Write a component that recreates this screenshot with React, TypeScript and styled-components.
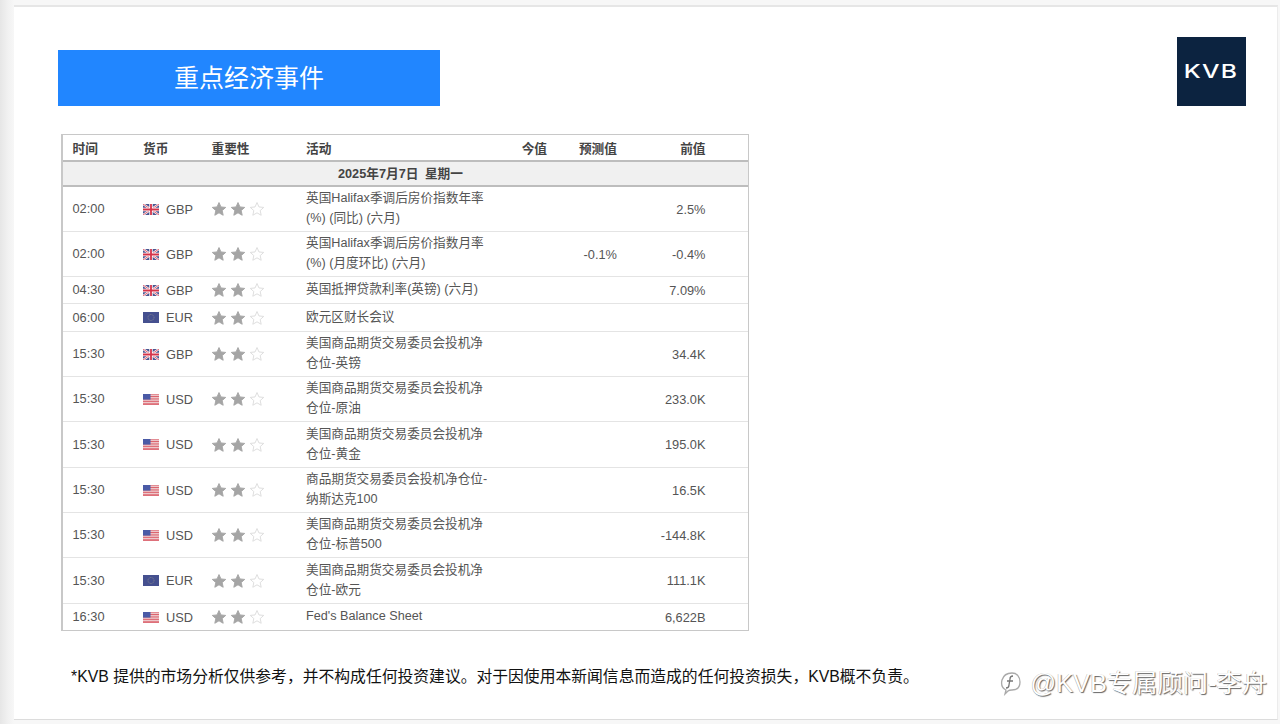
import React from "react";
import styled, { createGlobalStyle } from "styled-components";

const Global = createGlobalStyle`
  html, body { margin: 0; padding: 0; height: 100%; }
  body { background: #f6f6f6; font-family: "Liberation Sans", "Noto Sans CJK SC", sans-serif; overflow: hidden; }
`;

const Page = styled.div`
  width: 1280px;
  height: 724px;
  box-sizing: border-box;
  padding: 5px 2px 4px 14px;
  background: linear-gradient(90deg, #e6e6e6 0, #f1f1f1 8px, #f7f7f7 14px);
  display: flex;
`;

const Slide = styled.main`
  position: relative;
  flex: 1;
  box-sizing: border-box;
  background: #fff;
  border-top: 2px solid #e6e6e6;
  border-bottom: 1px solid #dcdcdc;
  border-right: 1px solid #ececec;
  padding: 30px 31px 0 44px;
  display: flex;
  flex-direction: column;
`;

const Header = styled.header`
  display: flex;
  justify-content: space-between;
  align-items: flex-end;
`;

const Banner = styled.h1`
  width: 382px;
  height: 56px;
  margin: 0;
  background: #2186ff;
  color: #fff;
  font-size: 25px;
  font-weight: 400;
  line-height: 53px;
  text-align: center;
  box-sizing: border-box;
  font-family: "Noto Sans CJK SC", sans-serif;
`;

const Logo = styled.div`
  width: 69px;
  height: 69px;
  background: #0c2340;
  color: #fff;
  display: flex;
  align-items: center;
  justify-content: center;
  font-family: "Inter", "Liberation Sans", sans-serif;
  font-weight: 500;
  font-size: 19px;
  letter-spacing: 1px;
`;

const LogoMark = styled.span`
  display: inline-block;
  transform: scaleX(1.3);
`;

const Table = styled.table`
  width: 687px;
  margin: 28px 0 0 3px;
  table-layout: fixed;
  border-collapse: separate;
  border-spacing: 0;
  border: 1px solid #c8c8c8;
  border-left-width: 2px;
  font-size: 12.8px;
  color: #555;
`;

const HeadCell = styled.th<{ $align?: string; $pad?: number }>`
  height: 25px;
  padding: 0 ${(p) => (p.$align === "right" ? (p.$pad ?? 0) : 0)}px 0 ${(p) => (p.$align === "right" ? 0 : (p.$pad ?? 10))}px;
  text-align: ${(p) => p.$align ?? "left"};
  font-size: 12.7px;
  font-weight: 700;
  color: #444;
  border-bottom: 2px solid #bdbdbd;
`;

const DateCell = styled.td`
  height: 25px;
  padding: 0 10px 2px 0;
  box-sizing: border-box;
  background: #f0f0f0;
  text-align: center;
  font-size: 12.7px;
  font-weight: 700;
  color: #444;
  border-bottom: 2px solid #bdbdbd;
  word-spacing: 3px;
`;

const Row = styled.tr<{ $height: number }>`
  height: ${(p) => p.$height}px;
`;

const Cell = styled.td<{ $last?: boolean }>`
  padding: 0;
  border-bottom: ${(p) => (p.$last ? "none" : "1px solid #e4e4e4")};
  vertical-align: middle;
`;

const TimeCell = styled(Cell)`
  padding-left: 9.5px;
  padding-bottom: 1px;
`;

const CurrencyWrap = styled.div`
  display: flex;
  align-items: center;
  gap: 7px;
  padding-left: 10px;
`;

const StarsWrap = styled.div`
  display: flex;
  gap: 5px;
  padding: 0 0 0 9.5px;
`;

const ActivityCell = styled(Cell)`
  padding-left: 9px;
  line-height: 20px;
  white-space: pre-line;
  font-size: 12.65px;
  padding-bottom: 2px;
`;

const NumberCell = styled(Cell)<{ $pad: number }>`
  text-align: right;
  padding-right: ${(p) => p.$pad}px;
  font-size: 12.8px;
`;

const Disclaimer = styled.p`
  margin: 35px 0 0 13px;
  font-size: 15.8px;
  line-height: 22px;
  color: #111;
  white-space: nowrap;
`;

const Watermark = styled.div`
  position: absolute;
  right: 10px;
  bottom: 21px;
  display: flex;
  align-items: center;
  gap: 8px;
  font-size: 25.3px;
  line-height: 30px;
  color: #fff;
  text-shadow: 1px 1px 1px rgba(0, 0, 0, 0.6), -0.5px -0.5px 0 rgba(0, 0, 0, 0.3);
`;

const GB = () => (
  <svg width="16" height="11" viewBox="0 0 16 11">
    <rect width="16" height="11" fill="#4a5590" />
    <path d="M0 0 16 11M16 0 0 11" stroke="#fff" strokeWidth="2.2" />
    <path d="M0 0 16 11M16 0 0 11" stroke="#d5344a" strokeWidth=".8" />
    <path d="M8 0V11M0 5.5H16" stroke="#fff" strokeWidth="3.4" />
    <path d="M8 0V11M0 5.500H16" stroke="#d5344a" strokeWidth="1.8" />
  </svg>
);

const US = () => (
  <svg width="16" height="11" viewBox="0 0 16 11">
    <rect width="16" height="11" fill="#f4f0f0" />
    <path d="M0 .8H16M0 2.5H16M0 4.2H16M0 5.9H16M0 7.6H16M0 9.3H16M0 10.6H16" stroke="#d9545f" strokeWidth=".9" />
    <rect width="7.5" height="5.6" fill="#4a5aa6" />
  </svg>
);

const EU = () => (
  <svg width="16" height="11" viewBox="0 0 16 11">
    <rect width="16" height="11" fill="#45508f" />
    <circle cx="8" cy="5.5" r="3" fill="none" stroke="#7d7f8f" strokeWidth=".9" strokeDasharray="1 .6" />
  </svg>
);

const STAR = "M7.5 .6 9.6 5.3 14.7 5.8 10.9 9.2 12 14.2 7.5 11.6 3 14.2 4.1 9.2 .3 5.8 5.4 5.3Z";

const Star = ({ filled }: { filled: boolean }) => (
  <svg width="14" height="14" viewBox="0 0 15 15">
    <path d={STAR} fill={filled ? "#a5a5a5" : "#fff"} stroke={filled ? "#a5a5a5" : "#dcdcdc"} strokeWidth="1" strokeLinejoin="round" />
  </svg>
);

const Flags = { GBP: GB, USD: US, EUR: EU } as const;
type Cur = keyof typeof Flags;

type Ev = { t: string; c: Cur; a: string; f?: string; p?: string; h: number };

const events: Ev[] = [
  { t: "02:00", c: "GBP", a: "英国Halifax季调后房价指数年率\n(%) (同比) (六月)", p: "2.5%", h: 45 },
  { t: "02:00", c: "GBP", a: "英国Halifax季调后房价指数月率\n(%) (月度环比) (六月)", f: "-0.1%", p: "-0.4%", h: 45 },
  { t: "04:30", c: "GBP", a: "英国抵押贷款利率(英镑) (六月)", p: "7.09%", h: 27 },
  { t: "06:00", c: "EUR", a: "欧元区财长会议", h: 28 },
  { t: "15:30", c: "GBP", a: "美国商品期货交易委员会投机净\n仓位-英镑", p: "34.4K", h: 45 },
  { t: "15:30", c: "USD", a: "美国商品期货交易委员会投机净\n仓位-原油", p: "233.0K", h: 45 },
  { t: "15:30", c: "USD", a: "美国商品期货交易委员会投机净\n仓位-黄金", p: "195.0K", h: 46 },
  { t: "15:30", c: "USD", a: "商品期货交易委员会投机净仓位-\n纳斯达克100", p: "16.5K", h: 45 },
  { t: "15:30", c: "USD", a: "美国商品期货交易委员会投机净\n仓位-标普500", p: "-144.8K", h: 45 },
  { t: "15:30", c: "EUR", a: "美国商品期货交易委员会投机净\n仓位-欧元", p: "111.1K", h: 46 },
  { t: "16:30", c: "USD", a: "Fed's Balance Sheet", p: "6,622B", h: 26 },
];

export default function App() {
  return (
    <Page>
      <Global />
      <Slide>
        <Header>
          <Banner>重点经济事件</Banner>
          <Logo>
            <LogoMark>KVB</LogoMark>
          </Logo>
        </Header>
        <Table>
          <colgroup>
            <col width="70" />
            <col width="69" />
            <col width="95" />
            <col width="200" />
            <col width="50" />
            <col width="70" />
            <col width="131" />
          </colgroup>
          <thead>
            <tr>
              <HeadCell $pad={9.5}>时间</HeadCell>
              <HeadCell $pad={10}>货币</HeadCell>
              <HeadCell $pad={9.5}>重要性</HeadCell>
              <HeadCell $pad={9}>活动</HeadCell>
              <HeadCell $align="right">今值</HeadCell>
              <HeadCell $align="right">预测值</HeadCell>
              <HeadCell $align="right" $pad={42.5}>前值</HeadCell>
            </tr>
            <tr>
              <DateCell colSpan={7}>2025年7月7日 星期一</DateCell>
            </tr>
          </thead>
          <tbody>
            {events.map((e, i) => {
              const Flag = Flags[e.c];
              const last = i === events.length - 1;
              return (
                <Row key={i} $height={e.h}>
                  <TimeCell $last={last}>{e.t}</TimeCell>
                  <Cell $last={last}>
                    <CurrencyWrap>
                      <Flag />
                      <span>{e.c}</span>
                    </CurrencyWrap>
                  </Cell>
                  <Cell $last={last}>
                    <StarsWrap>
                      <Star filled />
                      <Star filled />
                      <Star filled={false} />
                    </StarsWrap>
                  </Cell>
                  <ActivityCell $last={last}>{e.a}</ActivityCell>
                  <NumberCell $last={last} $pad={0} />
                  <NumberCell $last={last} $pad={0}>{e.f}</NumberCell>
                  <NumberCell $last={last} $pad={42.5}>{e.p}</NumberCell>
                </Row>
              );
            })}
          </tbody>
        </Table>
        <Disclaimer>*KVB 提供的市场分析仅供参考，并不构成任何投资建议。对于因使用本新闻信息而造成的任何投资损失，KVB概不负责。</Disclaimer>
        <Watermark>
          <svg width="22" height="26" viewBox="0 0 22 26" fill="none" stroke="#777" strokeWidth="1.3">
            <path d="M6 20C2 18 1 14 2 10 3.500 5 8 3 12 3c5 0 8 4 8 9 0 5-3 8-8 8-2 0-3 0-4 1l-3 3z" stroke="#aaa" />
            <path d="M13 6c-2 0-3 1-3 3l-1 6c0 2-1 3-3 3M7 11h6" />
          </svg>
          <span>@KVB专属顾问-李舟</span>
        </Watermark>
      </Slide>
    </Page>
  );
}
